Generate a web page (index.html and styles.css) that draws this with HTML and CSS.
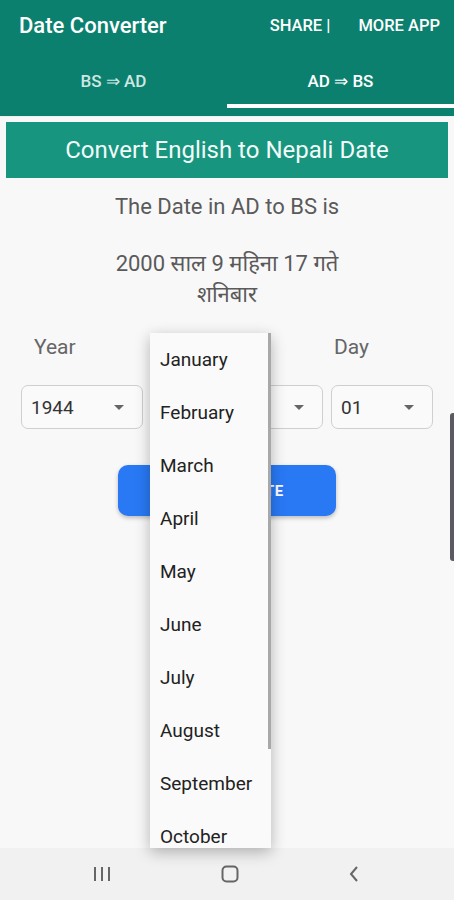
FILE: index.html
```html
<!DOCTYPE html>
<html>
<head>
<meta charset="utf-8">
<link rel="stylesheet" href="styles.css">
</head>
<body>
<div class="app">
  <header class="header">
    <div class="toolbar">
      <div class="title">Date Converter</div>
      <div class="actions"><span>SHARE |</span><span>MORE APP</span></div>
    </div>
    <div class="tabs">
      <div class="tab">BS ⇒ AD</div>
      <div class="tab active">AD ⇒ BS</div>
    </div>
  </header>
  <main class="content">
    <div class="banner">Convert English to Nepali Date</div>
    <p class="result-label">The Date in AD to BS is</p>
    <p class="result">2000 साल 9 महिना 17 गते<br>शनिबार</p>
    <div class="fields">
      <div class="label year">Year</div>
      <div class="label month">Month</div>
      <div class="label day">Day</div>
      <div class="select">1944<span class="caret"></span></div>
      <div class="select">January<span class="caret"></span></div>
      <div class="select">01<span class="caret"></span></div>
    </div>
    <div class="btn-row"><button class="convert">CONVERT DATE</button></div>
  </main>
  <nav class="navbar">
    <svg width="18" height="16" viewBox="0 0 18 16"><path d="M2 1v14M9 1v14M16 1v14" stroke="#666" stroke-width="2" fill="none"/></svg>
    <svg width="18" height="18" viewBox="0 0 18 18"><rect x="1.5" y="1.5" width="15" height="15" rx="4" stroke="#666" stroke-width="2" fill="none"/></svg>
    <svg width="10" height="16" viewBox="0 0 10 16"><path d="M8 1L2 8l6 7" stroke="#666" stroke-width="2" fill="none"/></svg>
  </nav>
  <div class="menu">
    <div class="menu-scroll"></div>
    <div class="item">January</div>
    <div class="item">February</div>
    <div class="item">March</div>
    <div class="item">April</div>
    <div class="item">May</div>
    <div class="item">June</div>
    <div class="item">July</div>
    <div class="item">August</div>
    <div class="item">September</div>
    <div class="item">October</div>
  </div>
  <div class="page-scroll"></div>
</div>
</body>
</html>
```
FILE: styles.css
```css
* { box-sizing: border-box; }
html, body { margin: 0; padding: 0; }
body {
  width: 454px;
  height: 900px;
  overflow: hidden;
  font-family: Roboto, "Noto Sans", sans-serif;
  background: #f8f8f8;
}
.app {
  position: relative;
  height: 900px;
  display: flex;
  flex-direction: column;
}
.header {
  background: #0c806e;
  color: #fff;
  height: 117px;
  border-bottom: 1px solid #e6f2ef;
}
.toolbar {
  height: 50px;
  display: flex;
  align-items: center;
  justify-content: space-between;
  padding: 0 14px 0 19px;
}
.title { font-size: 22px; font-weight: 500; }
.actions { display: flex; gap: 28px; font-size: 16.5px; font-weight: 500; }
.tabs {
  display: flex;
  height: 58px;
}
.tab {
  flex: 1;
  display: flex;
  align-items: center;
  justify-content: center;
  font-size: 17px;
  font-weight: 500;
  color: #cfe8e3;
  padding-top: 8px;
  border-bottom: 4px solid transparent;
}
.tab.active { color: #fff; border-bottom-color: #fff; }
.content { flex: 1; display: flex; flex-direction: column; }
.banner {
  margin: 5px 6px 0;
  height: 56px;
  background: #17957f;
  color: #f2fbf9;
  font-size: 24px;
  display: flex;
  align-items: center;
  justify-content: center;
}
.result-label {
  margin: 16px 0 0;
  text-align: center;
  color: #5a5a5a;
  font-size: 22px;
  line-height: 26px;
}
.result {
  margin: 28px 0 0;
  text-align: center;
  color: #5a5a5a;
  font-size: 22px;
  line-height: 31px;
}
.fields {
  margin-top: 24px;
  padding: 0 21px;
  display: grid;
  grid-template-columns: 122px 172px 102px;
  column-gap: 8px;
  row-gap: 25px;
}
.label { font-size: 21px; color: #666; line-height: 26px; }
.label.year { padding-left: 13px; }
.label.month { padding-left: 20px; }
.label.day { padding-left: 3px; }
.select {
  position: relative;
  height: 44px;
  border: 1px solid #cfcfcf;
  border-radius: 7px;
  background: #fafafa;
  display: flex;
  align-items: center;
  padding-left: 9px;
  font-size: 19px;
  color: #333;
}
.caret {
  position: absolute;
  right: 18px;
  top: 19px;
  width: 0;
  height: 0;
  border-left: 5px solid transparent;
  border-right: 5px solid transparent;
  border-top: 5px solid #666;
}
.btn-row { display: flex; justify-content: center; margin-top: 36px; }
.convert {
  width: 218px;
  height: 51px;
  border: 0;
  border-radius: 10px;
  background: #2979f5;
  color: #fff;
  font-family: Roboto, sans-serif;
  font-weight: 700;
  font-size: 15px;
  letter-spacing: 0.5px;
  box-shadow: 0 2px 4px rgba(0,0,0,0.25);
}
.navbar {
  height: 52px;
  background: #f1f1f1;
  display: flex;
  align-items: center;
  gap: 110px;
  padding-left: 93px;
}
.menu {
  position: absolute;
  left: 150px;
  top: 333px;
  width: 121px;
  height: 515px;
  background: #fafafa;
  box-shadow: 0 4px 14px rgba(0,0,0,0.28);
  overflow: hidden;
}
.item {
  height: 53px;
  display: flex;
  align-items: center;
  padding-left: 10px;
  font-size: 19px;
  color: #222;
}
.menu-scroll {
  position: absolute;
  right: 0;
  top: 0;
  width: 3px;
  height: 416px;
  background: #a8a8a8;
}
.page-scroll {
  position: absolute;
  right: 0;
  top: 413px;
  width: 4px;
  height: 148px;
  background: #5a5a60;
  border-radius: 3px 0 0 3px;
}
```
